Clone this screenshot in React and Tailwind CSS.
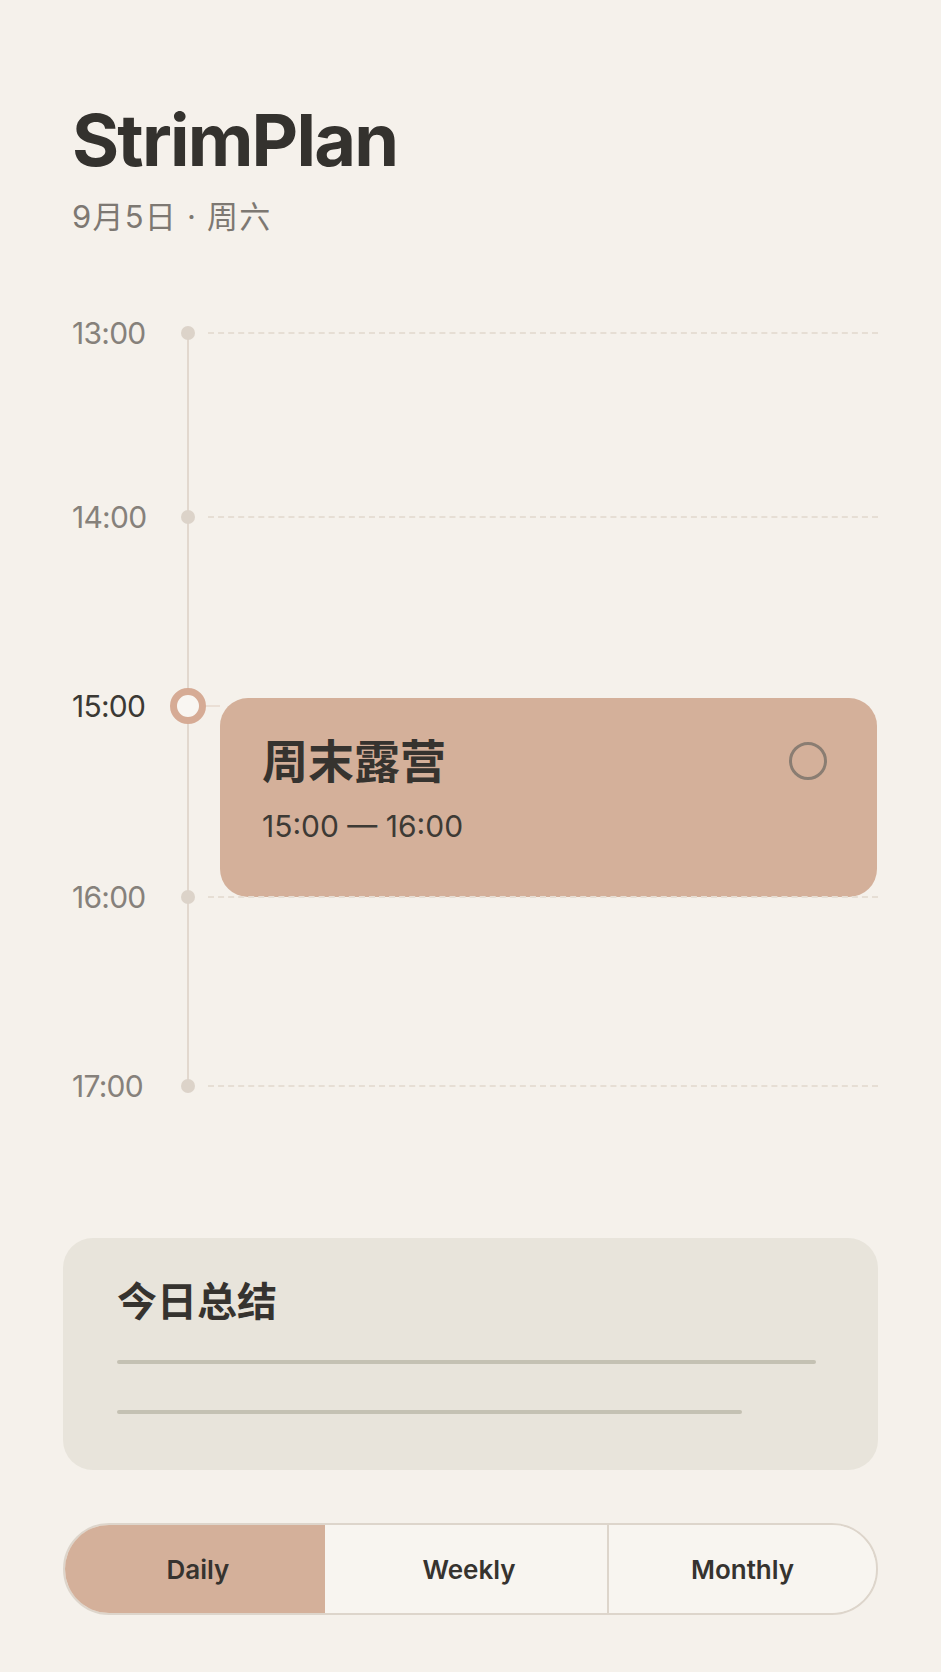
import React from 'react';

const FONT = 'font-["Inter","Noto_Sans_CJK_SC",sans-serif]';

const hours = [
  { label: '13:00', mt: 'mt-0' },
  { label: '14:00', mt: 'mt-[144px]' },
  { label: '15:00', mt: 'mt-[149px]', current: true },
  { label: '16:00', mt: 'mt-[151px]' },
  { label: '17:00', mt: 'mt-[149px]' },
];

const EventCard = () => (
  <div className="absolute left-[148px] top-[12px] w-[657px] h-[199px] rounded-[28px] bg-[#d4b09a] pl-[42px] pr-[50px] pt-[40px]">
    <div className="flex items-center justify-between">
      <h3 className="text-[46px] leading-none font-bold text-[#36332f]">周末露营</h3>
      <span className="w-[38px] h-[38px] rounded-full border-[3px] border-[#8a7d72]" />
    </div>
    <div className="mt-[27px] text-[30px] leading-none text-[#3d3a35]">15:00 — 16:00</div>
  </div>
);

const HourRow = ({ label, mt, current }) => (
  <div className={`relative flex items-center h-[40px] ${mt}`}>
    <span
      className={`w-[98px] text-[30px] leading-none tracking-tight ${
        current ? 'text-[#3b3934]' : 'text-[#86817b]'
      }`}
    >
      {label}
    </span>
    <div className="w-[36px] flex justify-center">
      {current ? (
        <span className="w-[36px] h-[36px] rounded-full border-[7px] border-[#d6ab95] bg-[#f9f6f2]" />
      ) : (
        <span className="w-[14px] h-[14px] rounded-full bg-[#dcd3c9]" />
      )}
    </div>
    {current ? (
      <div className="w-[14px] h-[2px] bg-[#eadfd5]" />
    ) : (
      <div className="flex-1 ml-[2px] h-0 border-t-2 border-dashed border-[#e6ded4]" />
    )}
    {current && <EventCard />}
  </div>
);

export default function App() {
  return (
    <div className={`min-h-[1672px] bg-[#f5f1eb] px-[63px] ${FONT} text-[#35332f]`}>
      {/* Header */}
      <header className="pl-[9px] pt-[104px]">
        <h1 className="text-[72px] leading-none font-bold tracking-tight text-[#34322e]">StrimPlan</h1>
        <p className="mt-[25px] text-[31px] leading-none tracking-[0.04em] text-[#7d7872]">9月5日 · 周六</p>
      </header>

      {/* Timeline */}
      <section className="relative ml-[9px] mt-[81px]">
        <div className="absolute left-[115px] top-[20px] w-[2px] h-[753px] bg-[#e2d8ce]" />
        {hours.map((h) => (
          <HourRow key={h.label} {...h} />
        ))}
      </section>

      {/* Summary */}
      <section className="mt-[132px] h-[232px] rounded-[30px] bg-[#e8e4db] pl-[54px] pr-[62px] pt-[44px]">
        <h2 className="text-[40px] leading-none font-bold text-[#36332f]">今日总结</h2>
        <div className="mt-[38px] h-[4px] rounded-full bg-[#c4c1b3]" />
        <div className="mt-[46px] h-[4px] w-[625px] rounded-full bg-[#c4c1b3]" />
      </section>

      {/* View switcher */}
      <nav className="mt-[53px] h-[92px] flex rounded-full border-2 border-[#ddd5cb] overflow-hidden text-[26px] font-semibold text-[#36332f]">
        <button className="w-[260px] bg-[#d4b09a] flex items-center justify-center pl-[6px]">Daily</button>
        <button className="w-[282px] bg-[#f8f5f0] flex items-center justify-center pl-[6px]">Weekly</button>
        <button className="flex-1 bg-[#f8f5f0] border-l-2 border-[#ddd5cb] flex items-center justify-center">Monthly</button>
      </nav>
    </div>
  );
}
